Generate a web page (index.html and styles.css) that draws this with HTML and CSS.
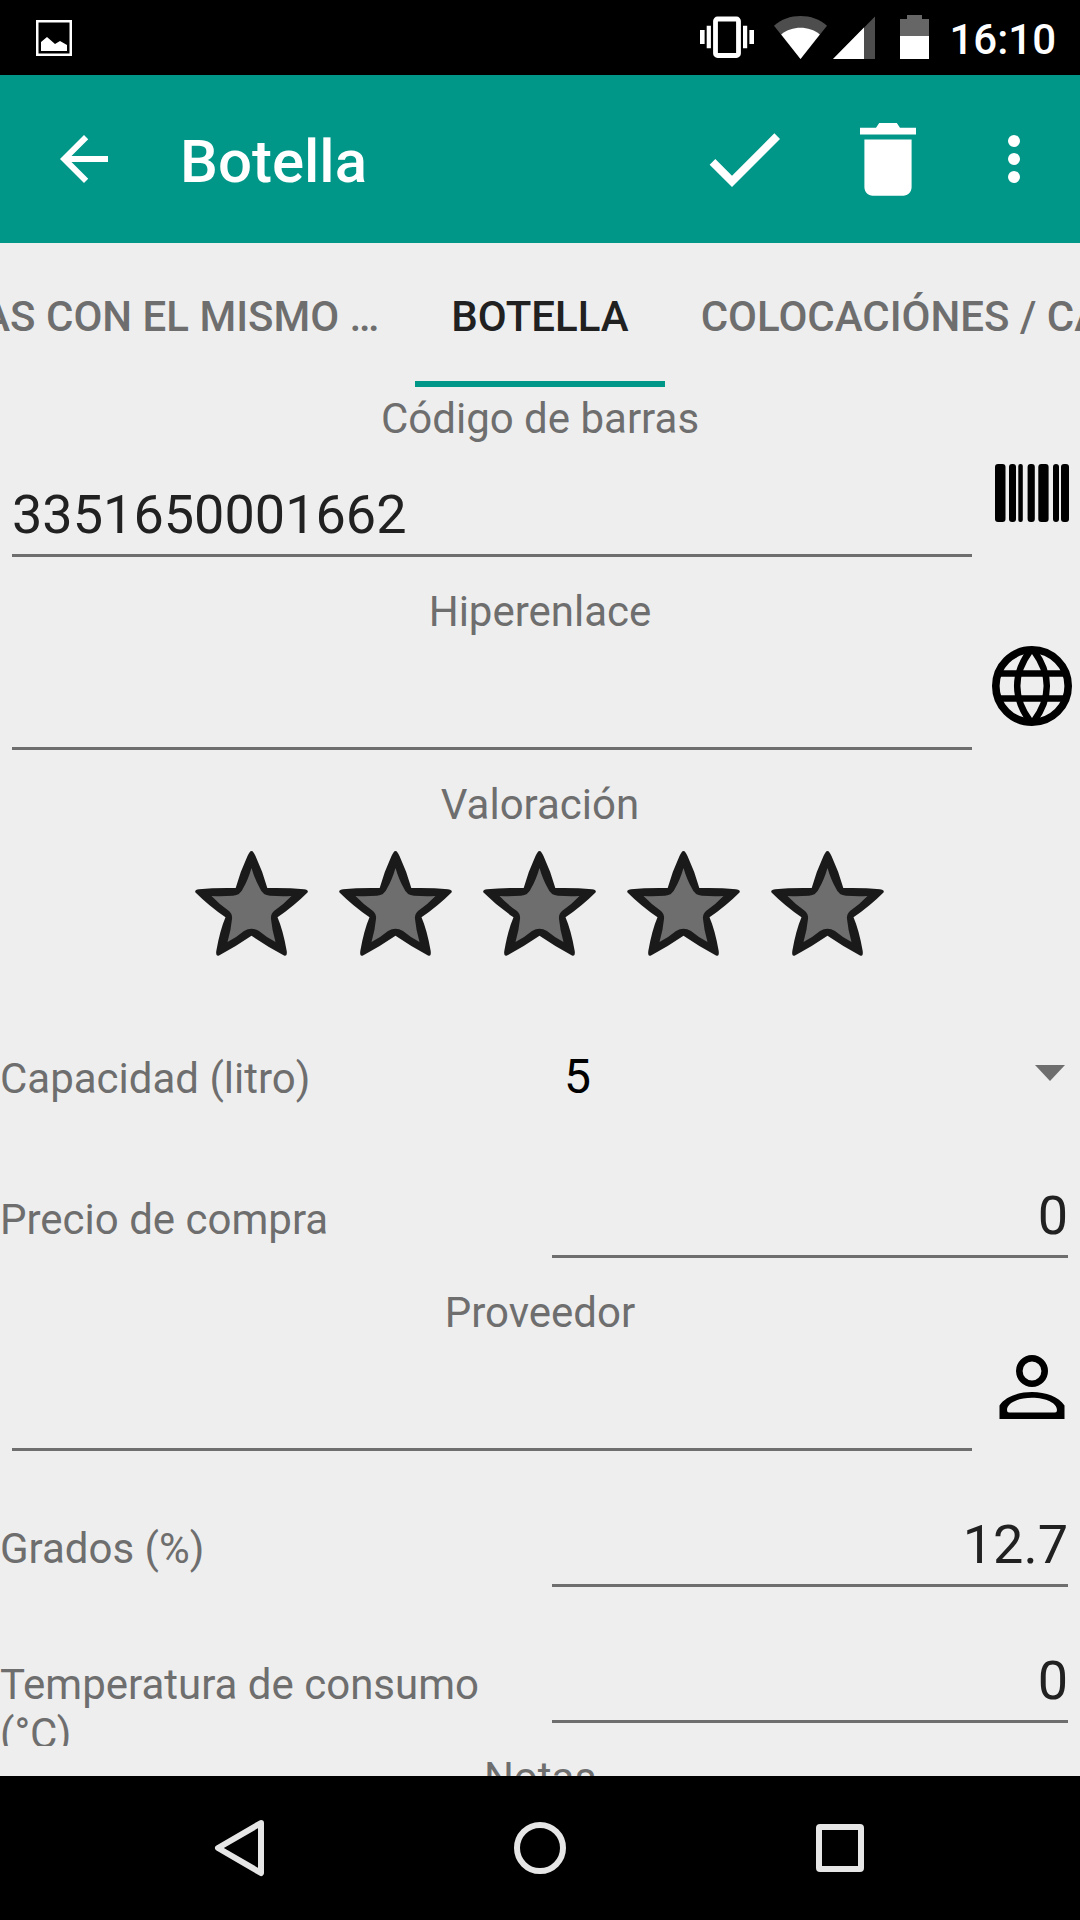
FILE: index.html
```html
<!DOCTYPE html>
<html lang="es">
<head>
<meta charset="UTF-8">
<meta name="viewport" content="width=device-width, initial-scale=1">
<title>Botella</title>
<link rel="stylesheet" href="styles.css">
</head>
<body>

<div class="status-bar">
  <svg width="44" height="44" viewBox="0 0 44 44" fill="#fff"><path fill-rule="evenodd" d="M4 5h36v36H4zM6.500 7.500v31h31v-31z"/><path d="M9 36v-9l6-5 8 7 5-3 7 4v6z"/></svg>
  <div class="status-icons">
    <svg width="54" height="44" viewBox="0 0 54 44" fill="#fff"><rect x="15.500" y="4" width="23" height="36.500" rx="2" fill="none" stroke="#fff" stroke-width="4.800"/><path d="M0 15h4.600v14H0zM6.700 10.700h4.200v22.600H6.700zM43 10.700h4.200v22.600H43zM49.400 15H54v14h-4.600z"/></svg>
    <div class="signals">
      <svg width="53" height="44" viewBox="0 0 53 44"><path fill="#4d4d4d" d="M26.500 44L0 10.700C14-2.200 39-2.200 53 10.700z"/><path fill="#fff" d="M26.500 44L7.200 19.400C18 10.500 35 10.500 45.800 19.400z"/></svg>
      <svg width="42" height="44" viewBox="0 0 42 44"><path fill="#4d4d4d" d="M0 44L42 1.500V44z"/><path fill="#fff" d="M0 44L31 12.600V44z"/></svg>
    </div>
    <svg width="34" height="44" viewBox="0 0 34 44"><path fill="#666" d="M5 4h7V0h15v4h7v17H5z"/><path fill="#fff" d="M5 21h29v23H5z"/></svg>
    <span class="clock">16:10</span>
  </div>
</div>

<header class="app-bar">
  <button class="bar-button bar-back" aria-label="Atrás"><svg width="72" height="72" viewBox="0 0 24 24"><path d="M20 11H7.830l5.590-5.590L12 4l-8 8 8 8 1.410-1.410L7.830 13H20v-2z"/></svg></button>
  <h1 class="bar-title">Botella</h1>
  <button class="bar-button" aria-label="Guardar"><svg width="96" height="96" viewBox="0 0 24 24"><path d="M9 16.170L4.830 12l-1.420 1.410L9 19 21 7l-1.410-1.410z"/></svg></button>
  <button class="bar-button" aria-label="Eliminar"><svg width="96" height="96" viewBox="0 0 24 24"><path d="M6.100 19c0 1.200.9 2.200 2.100 2.200h7.600c1.200 0 2.100-1 2.100-2.200V7.100H6.100zM19 4.200h-4l-.8-1.200H9.800L9 4.200H5v1.700h14z"/></svg></button>
  <button class="bar-button bar-more" aria-label="Más opciones"><svg width="72" height="72" viewBox="0 0 24 24"><circle cx="12" cy="6" r="2"/><circle cx="12" cy="12" r="2"/><circle cx="12" cy="18" r="2"/></svg></button>
</header>

<nav class="tabs" role="tablist">
  <button class="tab tab-prev" role="tab">BOTELLAS CON EL MISMO …</button>
  <button class="tab tab-active" role="tab" aria-selected="true">BOTELLA</button>
  <button class="tab tab-next" role="tab">COLOCACIÓNES / CAVA</button>
</nav>

<main class="content">
  <div class="field">
    <label class="field-label" for="codigo">Código de barras</label>
    <div class="field-line">
      <input class="text-input" type="text" id="codigo" value="3351650001662">
      <button class="field-button" aria-label="Escanear"><svg width="96" height="96" viewBox="0 0 96 96"><rect x="11" y="19" width="10.500" height="58" rx="3"/><rect x="25" y="19" width="7" height="58" rx="3"/><rect x="34.300" y="19" width="4.500" height="58" rx="2"/><rect x="43.600" y="19" width="7.200" height="58" rx="3"/><rect x="54.300" y="19" width="10.300" height="58" rx="3"/><rect x="69" y="19" width="6" height="58" rx="3"/><rect x="77" y="19" width="8" height="58" rx="3"/></svg></button>
    </div>
  </div>

  <div class="field">
    <label class="field-label" for="enlace">Hiperenlace</label>
    <div class="field-line">
      <input class="text-input" type="text" id="enlace">
      <button class="field-button" aria-label="Abrir enlace"><svg width="96" height="96" viewBox="0 0 96 96" fill="none" stroke="#000"><circle cx="48" cy="48" r="36.200" stroke-width="7.600"/><path stroke-width="6.600" d="M14 35.500h68M14 60.500h68M46 13C29 36 29 60 46 83M50 13C67 36 67 60 50 83"/></svg></button>
    </div>
  </div>

  <fieldset class="rating">
    <legend class="field-label">Valoración</legend>
    <div class="stars">
      <label class="star"><input type="radio" name="valoracion" value="1" aria-label="1"><svg width="144" height="171" viewBox="0 0 144 171"><g id="star"><path fill="#1a1a1a" d="M71.500 21C73 21 74 23 75.500 26Q83 42 87.300 58Q108 57.500 124 59.300Q129 60 127.500 62.500Q114 76 97.500 87.300Q103 100 106.700 121Q107.500 127 104 125.500Q88 117 71.500 105.700Q55 117 39 125.500Q35.500 127 36.300 121Q40 100 45.500 87.300Q29 76 15.500 62.500Q14 60 19 59.300Q35 57.500 55.700 58Q60 42 67.500 26C69 23 70 21 71.500 21z"/><path fill="#6e6e6e" d="M71.500 38Q75 50 80 58.500Q82.500 65 90 65.800Q101 66.500 111.500 66Q103 75 94 81Q90.500 84 91 89Q92 100 95.500 112Q86 107 79 101Q71.500 96.500 64 101Q57 107 47.500 112Q51 100 52 89Q52.500 84 49 81Q40 75 31.500 66Q42 66.500 53 65.800Q60.500 65 63 58.500Q68 50 71.500 38z"/></g></svg></label>
      <label class="star"><input type="radio" name="valoracion" value="2" aria-label="2"><svg width="144" height="171" viewBox="0 0 144 171"><use href="#star"/></svg></label>
      <label class="star"><input type="radio" name="valoracion" value="3" aria-label="3"><svg width="144" height="171" viewBox="0 0 144 171"><use href="#star"/></svg></label>
      <label class="star"><input type="radio" name="valoracion" value="4" aria-label="4"><svg width="144" height="171" viewBox="0 0 144 171"><use href="#star"/></svg></label>
      <label class="star"><input type="radio" name="valoracion" value="5" aria-label="5"><svg width="144" height="171" viewBox="0 0 144 171"><use href="#star"/></svg></label>
    </div>
  </fieldset>

  <div class="row row-spinner">
    <label class="row-label" for="capacidad">Capacidad (litro)</label>
    <div class="spinner">
      <select class="spinner-select" id="capacidad"><option>5</option></select>
      <svg class="spinner-arrow" width="30" height="16" viewBox="0 0 30 16"><path fill="#6e6e6e" d="M0 0h30L15 16z"/></svg>
    </div>
  </div>

  <div class="row">
    <label class="row-label" for="precio">Precio de compra</label>
    <input class="text-input number" type="text" inputmode="decimal" id="precio" value="0">
  </div>

  <div class="field">
    <label class="field-label" for="proveedor">Proveedor</label>
    <div class="field-line">
      <input class="text-input" type="text" id="proveedor">
      <button class="field-button" aria-label="Elegir proveedor"><svg width="96" height="96" viewBox="0 0 96 96"><circle cx="48" cy="32" r="12.700" fill="none" stroke="#000" stroke-width="6.600"/><path fill-rule="evenodd" d="M15.500 80V66.500C21 58 34 53 48 53s27 5 32.500 13.500V80zM25 73.500H71Q73 73.500 73 71C73 64 62 58.700 48 58.700S23 64 23 71Q23 73.500 25 73.500z"/></svg></button>
    </div>
  </div>

  <div class="row">
    <label class="row-label" for="grados">Grados (%)</label>
    <input class="text-input number" type="text" inputmode="decimal" id="grados" value="12.7">
  </div>

  <div class="row">
    <label class="row-label" for="temperatura">Temperatura de consumo (°C)</label>
    <input class="text-input number" type="text" inputmode="decimal" id="temperatura" value="0">
  </div>

  <div class="field">
    <label class="field-label" for="notas">Notas</label>
    <input class="text-input" type="text" id="notas">
  </div>
</main>

<footer class="nav-bar">
  <button class="nav-button" aria-label="Volver"><svg width="60" height="60" viewBox="0 0 60 60"><path d="M51 5L8 30l43 25z"/></svg></button>
  <button class="nav-button" aria-label="Inicio"><svg width="60" height="60" viewBox="0 0 60 60"><circle cx="30" cy="30" r="23"/></svg></button>
  <button class="nav-button" aria-label="Recientes"><svg width="60" height="60" viewBox="0 0 60 60"><rect x="9" y="9" width="42" height="42" rx="1"/></svg></button>
</footer>

</body>
</html>
```
FILE: styles.css
```css
* { box-sizing: border-box; }
body { margin: 0; height: 100vh; display: flex; flex-direction: column; background-color: #eee; font-family: Roboto, "Liberation Sans", sans-serif; font-size: 42px; line-height: 49px; color: #6e6e6e; }
button, input, select { margin: 0; padding: 0; border: 0; background: none; border-radius: 0; font: inherit; color: inherit; }
svg { display: block; flex: none; }

/* barra de estado */
.status-bar { flex: none; height: 75px; padding: 15px 24px 0 32px; display: flex; justify-content: space-between; background-color: #000; color: #fff; }
.status-icons { display: flex; gap: 20px; }
.signals { display: flex; gap: 6px; }
.clock { font-weight: 500; }

/* barra de la aplicación */
.app-bar { flex: none; height: 168px; padding: 0 12px 0 48px; display: flex; align-items: center; background-color: #009688; color: #fff; }
.bar-title { flex: 1; margin: 0; padding: 6px 0 0 60px; font-size: 60px; line-height: 70px; font-weight: 500; }
.bar-button { width: 144px; height: 144px; display: flex; align-items: center; justify-content: center; }
.bar-button svg { fill: #fff; }
.bar-back { width: 72px; }
.bar-more { width: 108px; }

/* pestañas */
.tabs { flex: none; height: 144px; display: grid; grid-template-columns: minmax(0, 1fr) auto minmax(0, 1fr); }
.tab { display: flex; padding: 49px 36px 0; border-bottom: 6px solid transparent; font-weight: 500; line-height: 49px; white-space: nowrap; overflow: hidden; }
.tab-prev { justify-content: flex-end; }
.tab-next { justify-content: flex-start; }
.tab-active { color: #212121; border-bottom-color: #009688; }

/* formulario */
.content { flex: 1; min-height: 0; overflow: hidden; }
.field-label { display: block; width: 100%; height: 57px; padding: 7px 0 0; text-align: center; }
.field-line { display: flex; align-items: flex-start; }
.text-input { flex: 1; min-width: 0; height: 113px; margin: 0 12px 23px; padding: 39px 0 8px; border-bottom: 3px solid #6e6e6e; outline: none; font-size: 54px; line-height: 63px; color: #212121; }
.field-button { width: 96px; height: 98px; display: flex; align-items: center; justify-content: center; }

.rating { margin: 0; padding: 0; border: 0; }
.stars { display: flex; justify-content: center; }
.star input { position: absolute; opacity: 0; }

.row { height: 136px; display: flex; align-items: baseline; overflow: hidden; }
.row-label { flex: 0 0 50%; }
.number { text-align: right; }
.row-spinner { height: 144px; }
.spinner { flex: 1; display: grid; align-items: center; }
.spinner-select { grid-area: 1 / 1; height: 144px; padding: 48px 24px 40px; appearance: none; font-size: 48px; line-height: 56px; color: #000; }
.spinner-arrow { grid-area: 1 / 1; justify-self: end; margin-right: 15px; pointer-events: none; }

/* barra de navegación */
.nav-bar { flex: none; height: 144px; padding: 0 90px; display: flex; background-color: #000; }
.nav-button { flex: 1; display: flex; align-items: center; justify-content: center; }
.nav-button svg { fill: none; stroke: #e6e6e6; stroke-width: 6; stroke-linejoin: round; }
```
